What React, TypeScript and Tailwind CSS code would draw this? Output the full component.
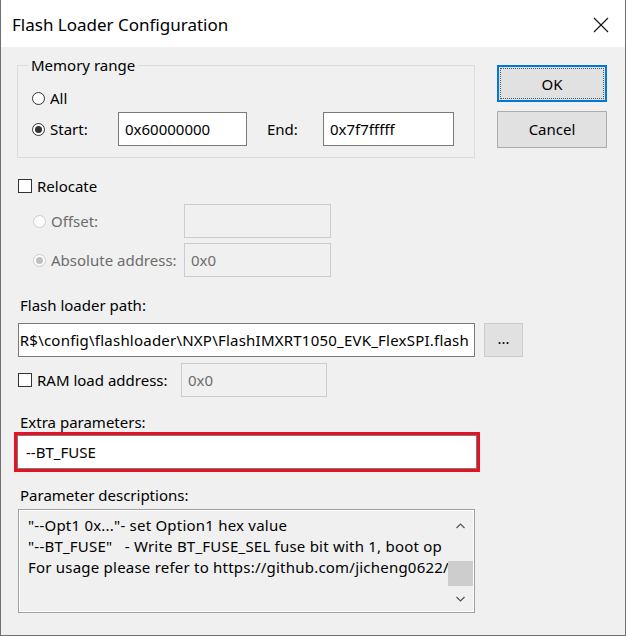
const Radio = ({ checked = false, disabled = false }: { checked?: boolean; disabled?: boolean }) => (
  <span
    className={`flex items-center justify-center w-[13px] h-[13px] rounded-full border shrink-0 ${
      disabled ? "border-[#cccccc] bg-[#fcfcfc]" : "border-[#333333] bg-white"
    }`}
  >
    {checked && (
      <span className={`w-[7px] h-[7px] rounded-full ${disabled ? "bg-[#bfbfbf]" : "bg-[#333333]"}`} />
    )}
  </span>
);

const Checkbox = () => <span className="w-[14px] h-[14px] border border-[#333333] bg-white shrink-0" />;

const Field = ({ value = "", disabled = false, className = "" }: { value?: string; disabled?: boolean; className?: string }) => (
  <div
    className={`flex items-center h-[34px] px-[6px] border overflow-hidden whitespace-nowrap ${
      disabled ? "border-[#cccccc] bg-[#f0f0f0] text-[#6d6d6d]" : "border-[#7a7a7a] bg-white text-black"
    } ${className}`}
  >
    {value}
  </div>
);

const Chevron = ({ up }: { up?: boolean }) => (
  <svg width="9" height="6" viewBox="0 0 9 6" fill="none" stroke="#505050" strokeWidth="1.1">
    {up ? <path d="M0.5 5 L4.5 1 L8.5 5" /> : <path d="M0.5 1 L4.5 5 L8.5 1" />}
  </svg>
);

export default function App() {
  return (
    <div
      className="w-[626px] h-[636px] flex flex-col border-x border-b border-[#707070] bg-[#f0f0f0] text-[15px] text-black leading-[20px]"
      style={{ fontFamily: '"Segoe UI", "Noto Sans", "Open Sans", sans-serif' }}
    >
      {/* TITLE BAR */}
      <div className="h-[47px] shrink-0 bg-white flex items-center justify-between pl-[11px] pr-[16px] pt-[3px]">
        <span className="text-[17px]">Flash Loader Configuration</span>
        <svg width="16" height="16" viewBox="0 0 16 16" stroke="#111" strokeWidth="1.1">
          <path d="M1 1 L15 15 M15 1 L1 15" />
        </svg>
      </div>

      {/* BODY */}
      <div className="flex flex-col pl-[16px]">
        {/* top row: memory range + buttons */}
        <div className="flex mt-[18px]">
          <div className="relative w-[458px] h-[93px] border border-[#dcdcdc] pt-[25px] pl-[14px]">
            <span className="absolute left-[10px] -top-[11px] px-[3px] bg-[#f0f0f0]">Memory range</span>
            <div className="flex items-center h-[14px] gap-[5px]">
              <Radio />
              <span>All</span>
            </div>
            <div className="flex items-center mt-[7px]">
              <div className="flex items-center gap-[5px] w-[86px]">
                <Radio checked />
                <span>Start:</span>
              </div>
              <Field value="0x60000000" className="w-[129px]" />
              <span className="ml-[20px] w-[56px]">End:</span>
              <Field value="0x7f7fffff" className="w-[131px]" />
            </div>
          </div>

          <div className="flex flex-col gap-[9px] ml-[22px]">
            <button className="w-[110px] h-[37px] border-2 border-[#0078d7] bg-[#e1e1e1] p-[1px]">
              <span className="flex items-center justify-center w-full h-full border border-dotted border-[#555555]">
                OK
              </span>
            </button>
            <button className="w-[110px] h-[37px] border border-[#adadad] bg-[#e1e1e1] pb-[1px]">Cancel</button>
          </div>
        </div>

        {/* relocate */}
        <div className="flex items-center h-[16px] mt-[20px] gap-[5px] pl-[1px]">
          <Checkbox />
          <span>Relocate</span>
        </div>
        <div className="flex items-center mt-[10px] pl-[16px]">
          <div className="flex items-center gap-[5px] w-[151px] text-[#6d6d6d]">
            <Radio disabled />
            <span>Offset:</span>
          </div>
          <Field disabled className="w-[147px]" />
        </div>
        <div className="flex items-center mt-[5px] pl-[16px]">
          <div className="flex items-center gap-[5px] w-[151px] text-[#6d6d6d]">
            <Radio checked disabled />
            <span>Absolute address:</span>
          </div>
          <Field disabled value="0x0" className="w-[147px]" />
        </div>

        {/* flash loader path */}
        <div className="h-[20px] mt-[18px] pl-[3px]">Flash loader path:</div>
        <div className="flex items-center mt-[8px] gap-[9px] pl-[1px]">
          <div className="flex justify-end items-center w-[457px] h-[34px] pr-[5px] border border-[#7a7a7a] bg-white overflow-hidden whitespace-nowrap tracking-[0.22px]">
            R$\config\flashloader\NXP\FlashIMXRT1050_EVK_FlexSPI.flash
          </div>
          <button className="w-[39px] h-[34px] border border-[#cccccc] bg-[#e1e1e1] leading-none pb-[4px]">...</button>
        </div>

        {/* RAM load address */}
        <div className="flex items-center mt-[6px] pl-[1px]">
          <div className="flex items-center gap-[5px] w-[163px]">
            <Checkbox />
            <span>RAM load address:</span>
          </div>
          <Field disabled value="0x0" className="w-[146px]" />
        </div>

        {/* extra parameters */}
        <div className="h-[20px] mt-[15px] pl-[3px]">Extra parameters:</div>
        <div className="-ml-[3px] w-[466px] h-[40px] border-[3px] border-[#e81123]">
          <div className="flex items-center h-full pl-[8px] border border-[#7a7a7a] bg-white">--BT_FUSE</div>
        </div>

        {/* parameter descriptions */}
        <div className="h-[20px] mt-[13px] pl-[3px]">Parameter descriptions:</div>
        <div className="mt-[4px] ml-[1px] w-[457px] h-[104px] border border-[#a0a0a0]">
          <div className="flex h-full border border-white">
            <div className="flex-1 pl-[8px] pt-[4px] leading-[21px] overflow-hidden whitespace-pre tracking-[0.22px]">
              <div>"--Opt1 0x..."- set Option1 hex value</div>
              <div>"--BT_FUSE"   - Write BT_FUSE_SEL fuse bit with 1, boot op</div>
              <div>For usage please refer to https://github.com/jicheng0622/</div>
            </div>
            <div className="flex flex-col w-[25px]">
              <div className="h-[29px] flex items-center justify-center">
                <Chevron up />
              </div>
              <div className="flex-1" />
              <div className="h-[25px] bg-[#cdcdcd]" />
              <div className="h-[25px] flex items-center justify-center">
                <Chevron />
              </div>
            </div>
          </div>
        </div>
      </div>
    </div>
  );
}
